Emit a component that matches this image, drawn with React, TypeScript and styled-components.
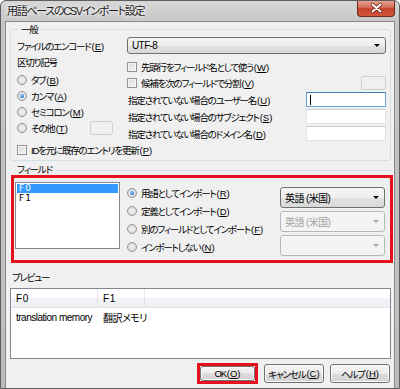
import React from 'react';
import styled, { createGlobalStyle, css } from 'styled-components';

const GlobalStyle = createGlobalStyle`
  html, body {
    margin: 0;
    padding: 0;
    background: #ffffff;
  }
  body {
    font-family: "Liberation Sans", "Noto Sans CJK JP", sans-serif;
    font-size: 9.5px;
    letter-spacing: -1.2px;
    font-feature-settings: "palt" 1;
    color: #000;
  }
`;

const Window = styled.div`
  width: 400px;
  height: 389px;
  box-sizing: border-box;
  border: 1px solid #5e5e5e;
  border-radius: 6px 6px 0 0;
  background: linear-gradient(180deg, #d6d6d6 0px, #c6c6c6 22px, #bdbdbd 100%);
  padding: 0 4px 4px;
  display: flex;
  flex-direction: column;
  overflow: hidden;
`;

const TitleBar = styled.div`
  height: 21px;
  display: flex;
  justify-content: space-between;
  align-items: flex-start;
  padding-left: 2px;
`;

const TitleText = styled.span`
  font-size: 11px;
  letter-spacing: -1.3px;
  line-height: 20px;
  color: #1a1a1a;
  text-shadow: 0 0 6px #ffffff, 0 0 3px #ffffff;
`;

const CloseButton = styled.div`
  width: 38px;
  height: 17px;
  margin-top: -1px;
  box-sizing: border-box;
  border: 1px solid #6b2a22;
  border-top: none;
  border-radius: 0 0 4px 4px;
  background: linear-gradient(180deg, #e8a597 0%, #d7705d 45%, #c4412a 55%, #d0573c 100%);
  display: flex;
  align-items: center;
  justify-content: center;
`;

const Client = styled.div`
  flex: 1;
  border: 1px solid #8a8a8a;
  background: #f0f0f0;
  padding: 0 1px 4px 4px;
  display: flex;
  flex-direction: column;
`;

const Group = styled.fieldset`
  margin: 0 2px 0 0;
  padding: 0 4px 2px 6px;
  border: 1px solid #d5dfe5;
  border-radius: 3px;
  min-width: 0;
`;

const Legend = styled.legend`
  padding: 0 2px;
  margin-left: 2px;
  line-height: 15px;
`;

const Mnemonic = styled.span`
  letter-spacing: 0;
  margin-left: 1px;
  & > u {
    text-underline-offset: 1px;
  }
`;

const Mn = ({ k }: { k: string }) => (
  <Mnemonic>
    (<u>{k}</u>)
  </Mnemonic>
);

const Label = styled.span`
  white-space: nowrap;
`;

const EncodingRow = styled.div`
  display: flex;
  align-items: center;
  height: 17px;
`;

const FieldLabel = styled.span`
  width: 110px;
  flex: none;
  white-space: nowrap;
`;

const Combo = styled.div<{ $disabled?: boolean; $tall?: boolean }>`
  flex: 1;
  height: ${p => (p.$tall ? 17 : 15)}px;
  box-sizing: border-box;
  border: 1px solid #707070;
  border-radius: 3px;
  background: linear-gradient(180deg, #f6f6f6 0%, #eeeeee 50%, #e2e2e2 50%, #d9d9d9 100%);
  display: flex;
  align-items: center;
  padding: 0 5px 0 4px;
  white-space: nowrap;
  font-size: 10px;
  letter-spacing: -0.6px;
  ${p =>
    p.$disabled &&
    css`
      border-color: #b5b8bb;
      background: #f4f4f4;
      color: #a3a3a3;
    `}
`;

const ComboText = styled.span`
  flex: 1;
`;

const Arrow = styled.span<{ $disabled?: boolean }>`
  width: 0;
  height: 0;
  border-left: 3px solid transparent;
  border-right: 3px solid transparent;
  border-top: 3px solid ${p => (p.$disabled ? '#a8a8a8' : '#000')};
`;

const Columns = styled.div`
  display: flex;
`;

const LeftCol = styled.div`
  width: 110px;
  flex: none;
  display: flex;
  flex-direction: column;
`;

const RightCol = styled.div`
  flex: 1;
  padding-top: 5px;
  display: flex;
  flex-direction: column;
`;

const HeadRow = styled.div`
  height: 18px;
  line-height: 18px;
`;

const OptRow = styled.div<{ $h?: number }>`
  height: ${p => p.$h ?? 16}px;
  display: flex;
  align-items: center;
  gap: 4px;
  white-space: nowrap;
`;

const Radio = styled.span<{ $on?: boolean }>`
  width: 10px;
  height: 10px;
  flex: none;
  box-sizing: border-box;
  border-radius: 50%;
  border: 1px solid #939393;
  background: radial-gradient(circle at 50% 50%, #f2f2f2 0%, #d4d4d4 100%);
  display: flex;
  align-items: center;
  justify-content: center;
  ${p =>
    p.$on &&
    css`
      &::after {
        content: '';
        width: 4px;
        height: 4px;
        border-radius: 50%;
        background: radial-gradient(circle at 40% 35%, #9ad4ff 0%, #1a6bc4 75%);
      }
    `}
`;

const Check = styled.span`
  width: 10px;
  height: 10px;
  flex: none;
  box-sizing: border-box;
  border: 1px solid #939393;
  background: linear-gradient(135deg, #d8d8d8 0%, #f7f7f7 100%);
  box-shadow: inset 0 0 0 1px #f4f4f4;
`;

const SmallBox = styled.span<{ $w: number; $right: number }>`
  width: ${p => p.$w}px;
  height: 14px;
  box-sizing: border-box;
  margin-left: auto;
  margin-right: ${p => p.$right}px;
  border: 1px solid #cfcfcf;
  border-radius: 2px;
  background: #f0f0f0;
`;

const InputRow = styled.div`
  height: 17px;
  display: flex;
  align-items: center;
  white-space: nowrap;
  padding-left: 1px;
`;

const TextInput = styled.span<{ $focus?: boolean }>`
  margin-left: auto;
  width: 80px;
  height: 15px;
  box-sizing: border-box;
  border: 1px solid #dde3ea;
  border-top-color: #c9cfd6;
  background: #ffffff;
  display: flex;
  align-items: center;
  padding-left: 3px;
  ${p =>
    p.$focus &&
    css`
      border-color: #6ba3d9;
      border-top-color: #3d7bbb;
    `}
`;

const Caret = styled.span`
  width: 1px;
  height: 10px;
  background: #000;
`;

const SectionHead = styled.div`
  margin: 1px 2px 0 0;
  height: 13px;
  display: flex;
  align-items: center;
  gap: 4px;
  padding-left: 7px;
  &::after {
    content: '';
    flex: 1;
    border-top: 1px solid #d5dfe5;
    margin-top: 4px;
  }
`;

const Highlight = styled.div`
  margin-left: 1px;
  border: 3px solid #e3121c;
  padding: 4px 5px 4px 1px;
  display: flex;
`;

const ListBox = styled.div`
  width: 105px;
  height: 67px;
  flex: none;
  box-sizing: border-box;
  border: 1px solid #828790;
  background: #ffffff;
  padding: 1px 1px;
`;

const ListItem = styled.div<{ $sel?: boolean }>`
  height: 9px;
  line-height: 9px;
  padding-left: 2px;
  margin-bottom: 1px;
  letter-spacing: 1px;
  font-family: "DejaVu Sans", sans-serif;
  font-size: 9px;
  ${p =>
    p.$sel &&
    css`
      background: #3399ff;
      color: #ffffff;
    `}
`;

const RadioCol = styled.div`
  flex: 1;
  padding: 2px 0 0 7px;
  display: flex;
  flex-direction: column;
`;

const ComboCol = styled.div`
  width: 105px;
  flex: none;
  padding-top: 5px;
  display: flex;
  flex-direction: column;
  gap: 3.5px;
`;

const PreviewHead = styled.div`
  margin-top: 8px;
  height: 14px;
  line-height: 14px;
  padding-left: 2px;
`;

const ListView = styled.div`
  margin: 3px 2px 0 0;
  height: 71px;
  box-sizing: border-box;
  border: 1px solid #828790;
  background: #ffffff;
`;

const ListRow = styled.div<{ $header?: boolean }>`
  display: flex;
  height: ${p => (p.$header ? 18 : 16)}px;
  ${p =>
    p.$header &&
    css`
      background: linear-gradient(180deg, #ffffff 0%, #ffffff 50%, #f1f3f6 50%, #eef1f5 100%);
      border-bottom: 1px solid #e2e4e8;
      margin-bottom: 1px;
    `}
`;

const Cell = styled.div<{ $w?: number; $header?: boolean }>`
  width: ${p => (p.$w ? `${p.$w}px` : 'auto')};
  flex: ${p => (p.$w ? 'none' : '1')};
  box-sizing: border-box;
  padding-left: 5px;
  display: flex;
  align-items: center;
  white-space: nowrap;
  font-size: 10px;
  letter-spacing: -0.5px;
  ${p =>
    p.$header &&
    css`
      border-right: 1px solid #e2e4e8;
      letter-spacing: 0.6px;
    `}
`;

const ButtonRow = styled.div`
  margin-top: 4px;
  padding-right: 3px;
  display: flex;
  justify-content: flex-end;
  align-items: center;
  gap: 6px;
`;

const Button = styled.div<{ $fill?: boolean }>`
  width: ${p => (p.$fill ? '55px' : '60px')};
  height: ${p => (p.$fill ? '15px' : '19px')};
  box-sizing: border-box;
  border: 1px solid #707070;
  border-radius: 3px;
  background: linear-gradient(180deg, #f4f4f4 0%, #ececec 50%, #dedede 50%, #d2d2d2 100%);
  box-shadow: inset 0 0 0 1px #fbfbfb;
  display: flex;
  align-items: center;
  justify-content: center;
  white-space: nowrap;
`;

const RedFrame = styled.div`
  border: 3px solid #e3121c;
  display: flex;
`;

const fieldRadios = [
  { on: true, text: '用語としてインポート', key: 'R' },
  { on: false, text: '定義としてインポート', key: 'D' },
  { on: false, text: '別のフィールドとしてインポート', key: 'F' },
  { on: false, text: 'インポートしない', key: 'N' },
];

export default function App() {
  return (
    <>
      <GlobalStyle />
      <Window>
        <TitleBar>
          <TitleText>用語ベースのCSVインポート設定</TitleText>
          <CloseButton>
            <svg width="11" height="10" viewBox="0 0 11 10">
              <path d="M1.5 1.5 L9.5 8.5 M9.5 1.5 L1.5 8.5" stroke="#5a1a12" strokeWidth="3.4" strokeLinecap="round" />
              <path d="M1.5 1.5 L9.5 8.5 M9.5 1.5 L1.5 8.5" stroke="#ffffff" strokeWidth="2" strokeLinecap="round" />
            </svg>
          </CloseButton>
        </TitleBar>
        <Client>
          <Group>
            <Legend>一般</Legend>
            <EncodingRow>
              <FieldLabel>
                ファイルのエンコード<Mn k="E" />
              </FieldLabel>
              <Combo $tall>
                <ComboText>UTF-8</ComboText>
                <Arrow />
              </Combo>
            </EncodingRow>
            <Columns>
              <LeftCol>
                <HeadRow>区切り記号</HeadRow>
                <OptRow>
                  <Radio />
                  <Label>タブ<Mn k="B" /></Label>
                </OptRow>
                <OptRow>
                  <Radio $on />
                  <Label>カンマ<Mn k="A" /></Label>
                </OptRow>
                <OptRow>
                  <Radio />
                  <Label>セミコロン<Mn k="M" /></Label>
                </OptRow>
                <OptRow>
                  <Radio />
                  <Label>その他<Mn k="T" /></Label>
                  <SmallBox $w={23} $right={14} />
                </OptRow>
              </LeftCol>
              <RightCol>
                <OptRow>
                  <Check />
                  <Label>先頭行をフィールド名として使う<Mn k="W" /></Label>
                </OptRow>
                <OptRow>
                  <Check />
                  <Label>候補を次のフィールドで分割<Mn k="V" /></Label>
                  <SmallBox $w={25} $right={0} />
                </OptRow>
                <InputRow>
                  <Label>指定されていない場合のユーザー名<Mn k="U" /></Label>
                  <TextInput $focus>
                    <Caret />
                  </TextInput>
                </InputRow>
                <InputRow>
                  <Label>指定されていない場合のサブジェクト<Mn k="S" /></Label>
                  <TextInput />
                </InputRow>
                <InputRow>
                  <Label>指定されていない場合のドメイン名<Mn k="D" /></Label>
                  <TextInput />
                </InputRow>
              </RightCol>
            </Columns>
            <OptRow>
              <Check />
              <Label>IDを元に既存のエントリを更新<Mn k="P" /></Label>
            </OptRow>
          </Group>

          <SectionHead>フィールド</SectionHead>
          <Highlight>
            <ListBox>
              <ListItem $sel>F0</ListItem>
              <ListItem>F1</ListItem>
            </ListBox>
            <RadioCol>
              {fieldRadios.map(r => (
                <OptRow key={r.key} $h={18}>
                  <Radio $on={r.on} />
                  <Label>
                    {r.text}
                    <Mn k={r.key} />
                  </Label>
                </OptRow>
              ))}
            </RadioCol>
            <ComboCol>
              <Combo>
                <ComboText>英語 (米国)</ComboText>
                <Arrow />
              </Combo>
              <Combo $disabled>
                <ComboText>英語 (米国)</ComboText>
                <Arrow $disabled />
              </Combo>
              <Combo $disabled>
                <ComboText />
                <Arrow $disabled />
              </Combo>
            </ComboCol>
          </Highlight>

          <PreviewHead>プレビュー</PreviewHead>
          <ListView>
            <ListRow $header>
              <Cell $w={87} $header>F0</Cell>
              <Cell $w={47} $header>F1</Cell>
              <Cell />
            </ListRow>
            <ListRow>
              <Cell $w={87}>translation memory</Cell>
              <Cell $w={47}>翻訳メモリ</Cell>
              <Cell />
            </ListRow>
          </ListView>

          <ButtonRow>
            <RedFrame>
              <Button $fill>
                OK<Mn k="O" />
              </Button>
            </RedFrame>
            <Button>
              キャンセル<Mn k="C" />
            </Button>
            <Button>
              ヘルプ<Mn k="H" />
            </Button>
          </ButtonRow>
        </Client>
      </Window>
    </>
  );
}
